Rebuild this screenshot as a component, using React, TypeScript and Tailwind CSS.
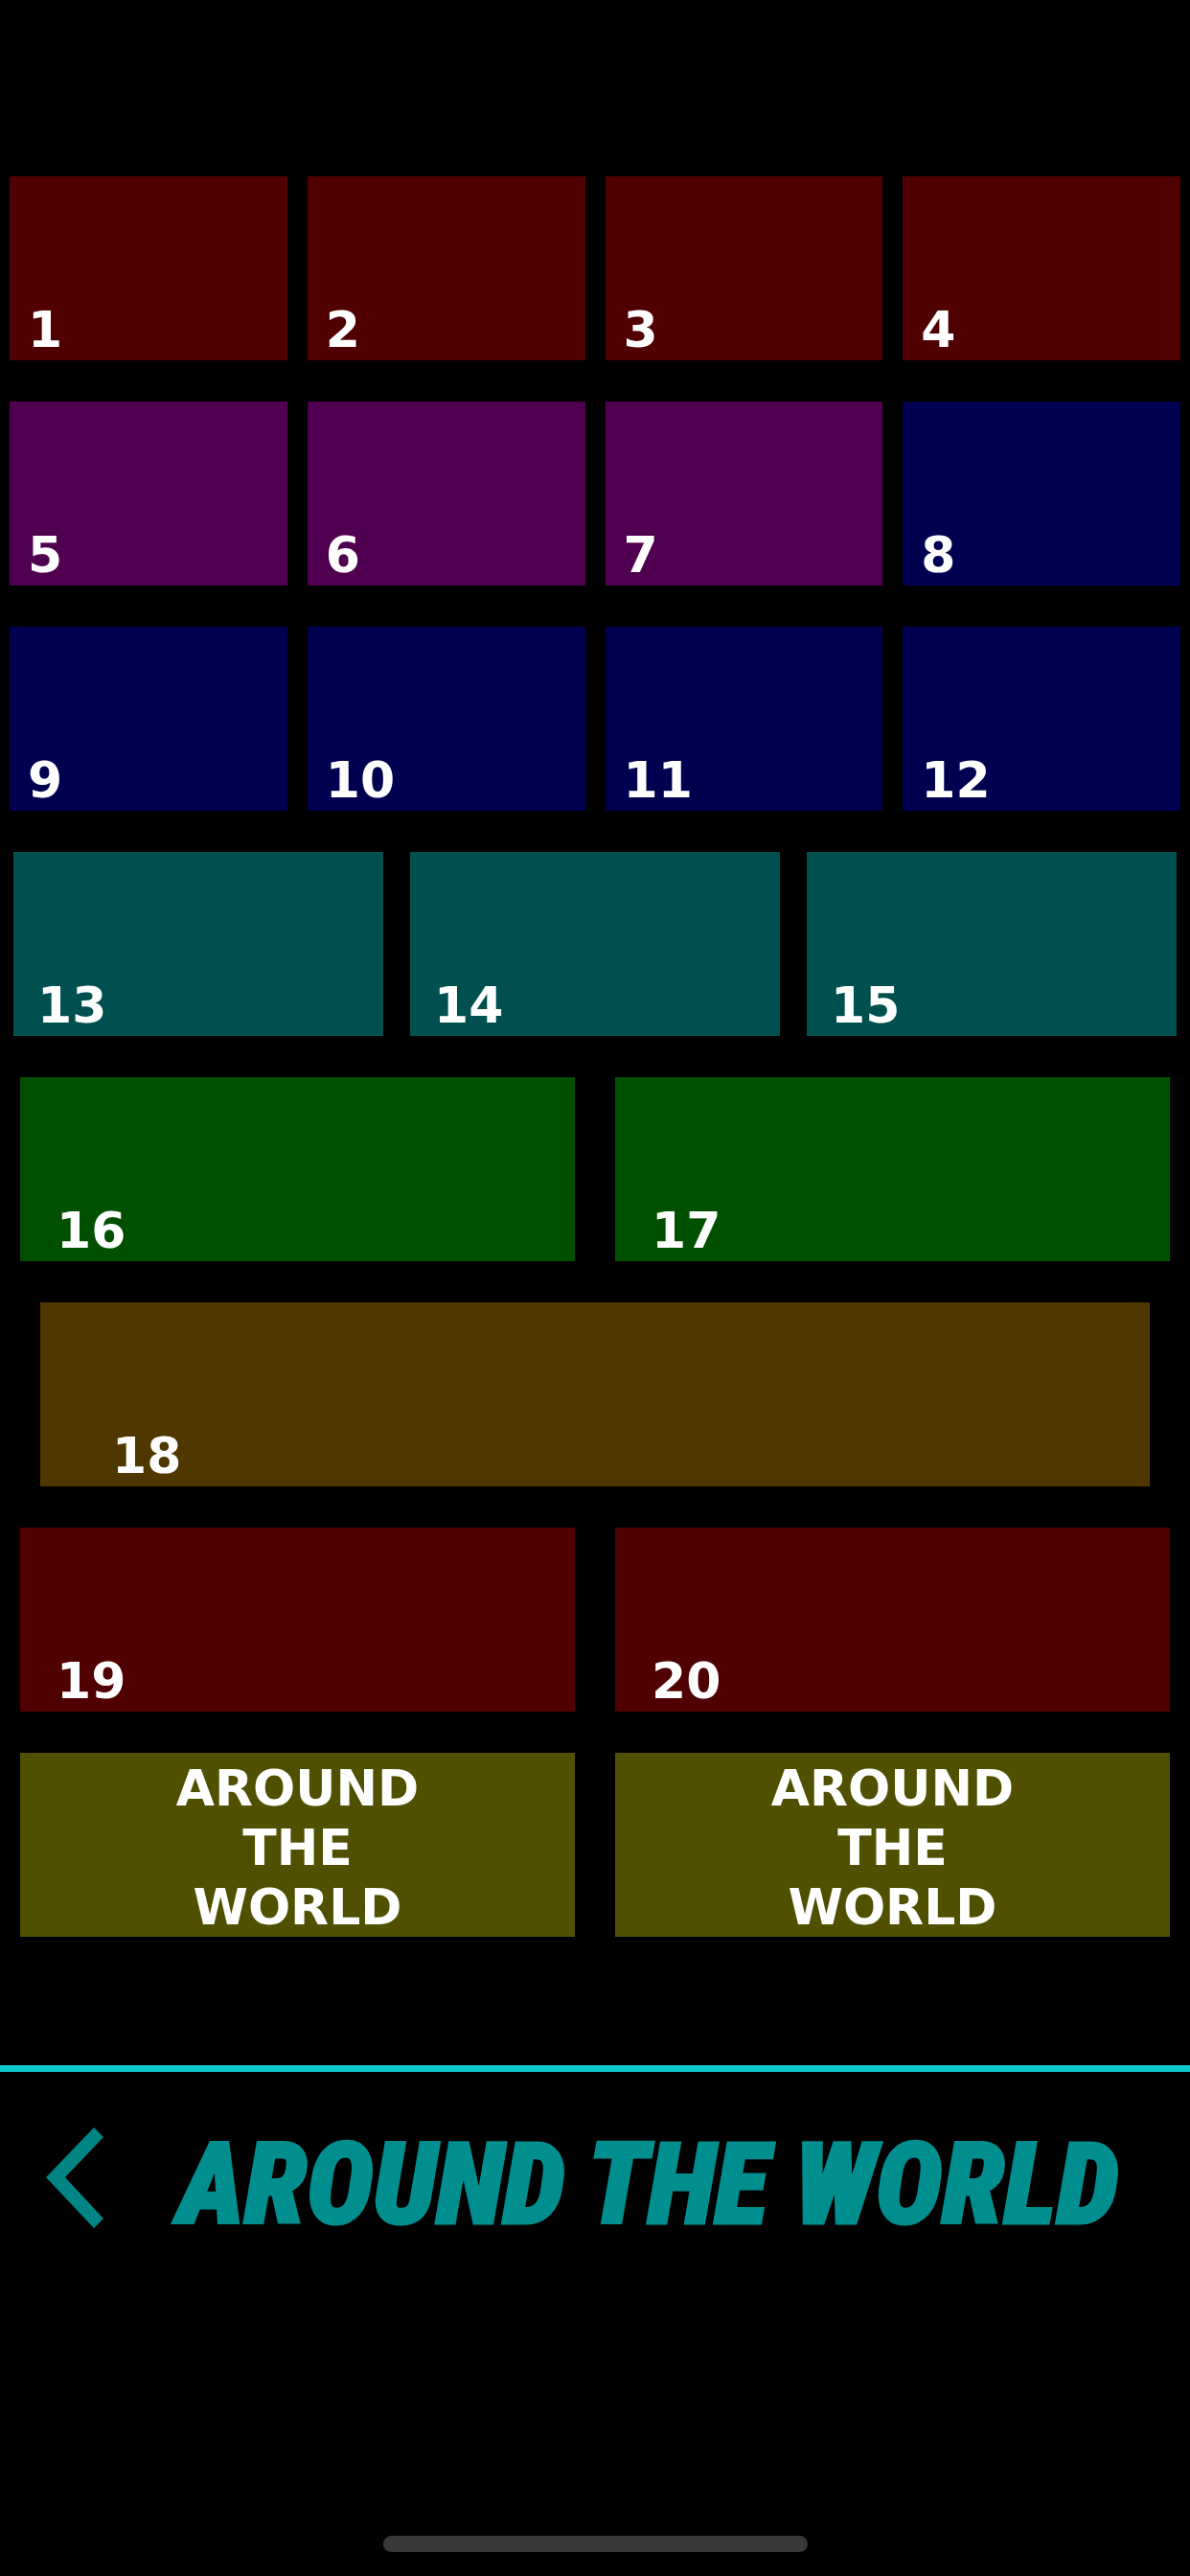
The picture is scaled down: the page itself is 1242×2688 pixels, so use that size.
import React from 'react';
import clsx from 'clsx';

interface Tile {
  label: string;
  color: string;
}

interface TileRowProps {
  tiles: Tile[];
}

const RED = 'bg-[#500000]';
const PURPLE = 'bg-[#500050]';
const BLUE = 'bg-[#000050]';
const TEAL = 'bg-[#005050]';
const GREEN = 'bg-[#005000]';
const ORANGE = 'bg-[#503700]';
const YELLOW = 'bg-[#505000]';

const rows: Tile[][] = [
  [
    { label: '1', color: RED },
    { label: '2', color: RED },
    { label: '3', color: RED },
    { label: '4', color: RED },
  ],
  [
    { label: '5', color: PURPLE },
    { label: '6', color: PURPLE },
    { label: '7', color: PURPLE },
    { label: '8', color: BLUE },
  ],
  [
    { label: '9', color: BLUE },
    { label: '10', color: BLUE },
    { label: '11', color: BLUE },
    { label: '12', color: BLUE },
  ],
  [
    { label: '13', color: TEAL },
    { label: '14', color: TEAL },
    { label: '15', color: TEAL },
  ],
  [
    { label: '16', color: GREEN },
    { label: '17', color: GREEN },
  ],
  [{ label: '18', color: ORANGE }],
  [
    { label: '19', color: RED },
    { label: '20', color: RED },
  ],
];

// Margins and number inset grow as the row holds fewer tiles
const rowStyles: Record<number, string> = {
  1: 'grid-cols-1 px-[42px]',
  2: 'grid-cols-2 px-[21px] gap-[42px]',
  3: 'grid-cols-3 px-[14px] gap-[28px]',
  4: 'grid-cols-4 px-[10px] gap-[21px]',
};

const insetStyles: Record<number, string> = {
  1: 'pl-[75px]',
  2: 'pl-[38px]',
  3: 'pl-[25px]',
  4: 'pl-[19px]',
};

const TileRow: React.FC<TileRowProps> = ({ tiles }) => (
  <div className={clsx('grid', rowStyles[tiles.length])}>
    {tiles.map((tile) => (
      <button
        key={tile.label}
        className={clsx(
          'flex h-48 items-end pb-[6px] text-[52px] leading-[52px] font-bold',
          insetStyles[tiles.length],
          tile.color
        )}
      >
        {tile.label}
      </button>
    ))}
  </div>
);

const WorldButton: React.FC = () => (
  <button
    className={clsx(
      'flex h-48 flex-col items-center justify-end text-[52px] leading-[62px] font-bold',
      YELLOW
    )}
  >
    <span>AROUND</span>
    <span>THE</span>
    <span>WORLD</span>
  </button>
);

export default function App() {
  return (
    <div className="flex min-h-screen flex-col bg-black font-['Verdana','DejaVu_Sans',sans-serif] text-white">
      <main className="flex flex-col gap-[43px] pt-[184px]">
        {rows.map((tiles) => (
          <TileRow key={tiles[0].label} tiles={tiles} />
        ))}
        <div className={clsx('grid', rowStyles[2])}>
          <WorldButton />
          <WorldButton />
        </div>
      </main>

      {/* Title bar */}
      <header className="mt-[134px] flex items-start border-t-[7px] border-[#0ec8cc] pt-[50px] pl-[48px]">
        <button aria-label="Back" className="shrink-0">
          <svg width="60" height="120" viewBox="0 0 60 120" fill="#008484">
            <path d="M50 8 L60 18 L20 60 L60 103 L50 113 L0 60 Z" />
          </svg>
        </button>
        <h1 className="pt-[8px] pl-[78px] font-['Roboto_Condensed','Roboto',sans-serif] text-[118px] leading-[120px] font-black whitespace-nowrap text-[#008e8e] italic [-webkit-text-stroke:3px_#008e8e]">
          AROUND THE WORLD
        </h1>
      </header>

      {/* Home indicator */}
      <div className="mx-auto mt-auto mb-[25px] h-[17px] w-[443px] rounded-full bg-[#393939]" />
    </div>
  );
}
